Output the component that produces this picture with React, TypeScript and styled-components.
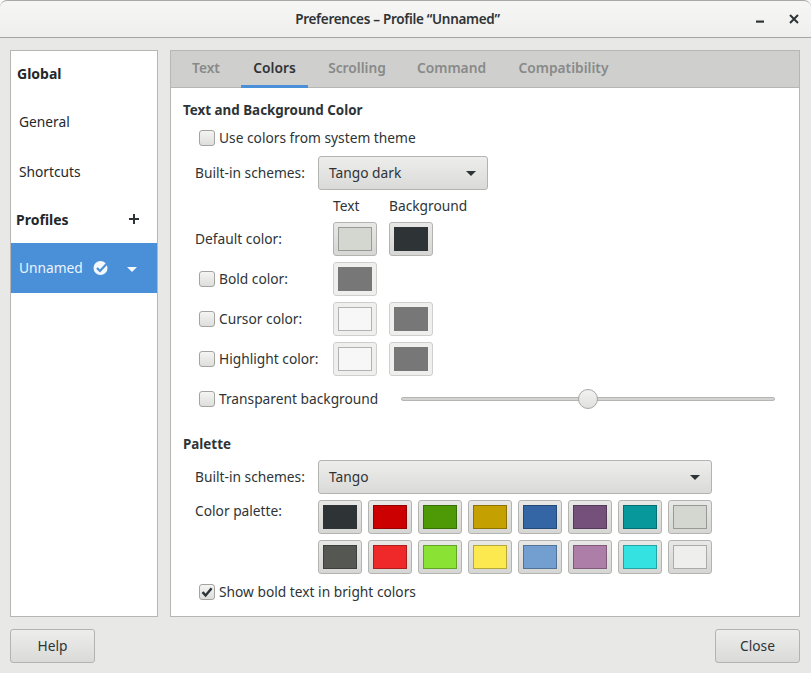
import React from "react";
import styled, { createGlobalStyle } from "styled-components";

const Global = createGlobalStyle`
  html, body { margin: 0; padding: 0; background: #fafafa; }
  body { font-family: "Noto Sans", "Open Sans", sans-serif; font-size: 13.75px; color: #2e3436; }
  * { box-sizing: border-box; }
`;

const Window = styled.div`
  width: 811px;
  height: 673px;
  display: flex;
  flex-direction: column;
  overflow: hidden;
`;

const TitleBar = styled.header`
  position: relative;
  height: 38px;
  flex: none;
  display: flex;
  align-items: center;
  justify-content: center;
  padding: 0 16px 0 0;
  background: linear-gradient(#f6f6f5, #efefee);
  border-top: 1px solid #a9a9a7;
  border-bottom: 1px solid #a4a4a2;
  border-radius: 7px 7px 0 0;
  font-weight: 600;
  font-size: 13.5px;
  letter-spacing: -0.3px;
  color: #2e3436;
`;

const WindowControls = styled.div`
  position: absolute;
  right: 9px;
  top: 11px;
  display: flex;
  gap: 14px;
  align-items: center;
`;

const Client = styled.div`
  flex: 1;
  display: flex;
  flex-direction: column;
  background: #e8e8e7;
  min-height: 0;
`;

const Main = styled.main`
  flex: none;
  display: flex;
  gap: 12px;
  padding: 12px 11px 0 10px;
`;

const Sidebar = styled.nav`
  width: 148px;
  height: 567px;
  flex: none;
  background: #fff;
  border: 1px solid #b6b6b3;
`;

const SideRow = styled.div<{ $height: number; $pad: number; $bold?: boolean }>`
  height: ${(p) => p.$height}px;
  padding: 0 16px 2px ${(p) => p.$pad}px;
  display: flex;
  align-items: center;
  justify-content: space-between;
  font-size: ${(p) => (p.$bold ? 14 : 13.75)}px;
  font-weight: ${(p) => (p.$bold ? 700 : 400)};
  color: #23282a;
`;

const SelectedRow = styled.div`
  height: 50px;
  padding-left: 8px;
  display: flex;
  align-items: center;
  background: #4a90d9;
  color: #eaf4fd;
`;

const SelectedName = styled.span`
  width: 74px;
  flex: none;
  padding-bottom: 2px;
`;

const SelectedCaret = styled.span`
  margin-left: 18px;
  display: flex;
`;

const Panel = styled.section`
  width: 630px;
  height: 567px;
  flex: none;
  background: #fff;
  border: 1px solid #b6b6b3;
  display: flex;
  flex-direction: column;
`;

const TabBar = styled.div`
  height: 37px;
  flex: none;
  display: flex;
  background: #cfcfcd;
  border-bottom: 1px solid #b6b6b3;
`;

const Tab = styled.div<{ $active?: boolean; $width: number }>`
  width: ${(p) => p.$width}px;
  height: 37px;
  display: flex;
  align-items: center;
  justify-content: center;
  padding-bottom: 1px;
  font-weight: 600;
  font-size: 13.75px;
  color: ${(p) => (p.$active ? "#2e3436" : "#888a89")};
  border-bottom: 3px solid ${(p) => (p.$active ? "#4a90d9" : "transparent")};
`;

const Content = styled.div`
  padding: 12px 12px 0 12px;
  display: flex;
  flex-direction: column;
`;

const Heading = styled.h2<{ $top?: number }>`
  margin: ${(p) => p.$top ?? 0}px 0 0 0;
  height: 20px;
  line-height: 20px;
  font-size: 13.4px;
  font-weight: 700;
  color: #2e3436;
`;

const Row = styled.div<{ $top: number; $h?: number; $left?: number }>`
  display: flex;
  align-items: center;
  margin-top: ${(p) => p.$top}px;
  height: ${(p) => p.$h ?? 20}px;
  padding-left: ${(p) => p.$left ?? 12}px;
`;

const CheckWrap = styled.label`
  display: flex;
  align-items: center;
  gap: 4px;
  white-space: nowrap;
  color: #2e3436;
`;

const CheckText = styled.span`
  padding-bottom: 2px;
`;

const CheckBox = styled.span`
  width: 16px;
  height: 16px;
  flex: none;
  display: flex;
  align-items: center;
  justify-content: center;
  border: 1px solid #a3a3a0;
  border-radius: 3px;
  background: linear-gradient(#f4f4f3, #dededc);
`;

const Label = styled.span<{ $width: number }>`
  width: ${(p) => p.$width}px;
  flex: none;
  white-space: nowrap;
  padding-bottom: 2px;
`;

const CheckCell = styled.span<{ $width: number }>`
  width: ${(p) => p.$width}px;
  flex: none;
`;

const Combo = styled.div<{ $width: number }>`
  width: ${(p) => p.$width}px;
  height: 34px;
  display: flex;
  align-items: center;
  justify-content: space-between;
  padding: 0 11px 2px 10px;
  border: 1px solid #b3b3b0;
  border-radius: 3px;
  background: linear-gradient(#ededec, #dadad8);
  color: #2e3436;
`;

const Caret = styled.span<{ $color?: string }>`
  width: 0;
  height: 0;
  margin-top: 2px;
  border-left: 5px solid transparent;
  border-right: 5px solid transparent;
  border-top: 5px solid ${(p) => p.$color ?? "#2e3436"};
`;

const Swatch = styled.div<{ $flat?: boolean }>`
  width: 44px;
  height: 34px;
  flex: none;
  padding: 4px;
  border: 1px solid ${(p) => (p.$flat ? "#cfcfcd" : "#b3b3b0")};
  border-radius: 3px;
  background: ${(p) => (p.$flat ? "#efefee" : "linear-gradient(#e8e8e7, #d6d6d4)")};
`;

const SwatchFill = styled.div<{ $fill: string; $line: string }>`
  width: 100%;
  height: 100%;
  background: ${(p) => p.$fill};
  border: 1px solid ${(p) => p.$line};
`;

const ColorHead = styled.span<{ $width: number }>`
  width: ${(p) => p.$width}px;
  flex: none;
  white-space: nowrap;
  padding-bottom: 2px;
`;

const SwatchGap = styled.div`
  width: 12px;
  flex: none;
`;

const Slider = styled.div`
  position: relative;
  width: 374px;
  height: 4px;
  margin-left: 28px;
  background: #d4d4d2;
  border: 1px solid #b5b5b2;
  border-radius: 2px;
`;

const Knob = styled.span`
  position: absolute;
  left: 176px;
  top: -9px;
  width: 20px;
  height: 20px;
  border-radius: 50%;
  border: 1px solid #a7a7a4;
  background: linear-gradient(#f2f2f1, #e0e0de);
`;

const PaletteBlock = styled.div`
  display: flex;
  margin-top: 6px;
  padding-left: 12px;
`;

const PaletteLabel = styled.span`
  width: 123px;
  flex: none;
  line-height: 20px;
  padding-top: 1px;
`;

const PaletteGrid = styled.div`
  display: grid;
  grid-template-columns: repeat(8, 44px);
  gap: 6px;
`;

const Footer = styled.footer`
  display: flex;
  justify-content: space-between;
  padding: 12px 11px 0 10px;
`;

const Button = styled.button`
  width: 85px;
  height: 34px;
  border: 1px solid #b3b3b0;
  border-radius: 3px;
  background: linear-gradient(#ededec, #dadad8);
  font: inherit;
  color: #2e3436;
  padding: 0 0 2px;
`;

const Form = styled.div``;

const darken = (hex: string) => {
  const n = parseInt(hex.slice(1), 16);
  const c = (s: number) => Math.round(((n >> s) & 255) * 0.72);
  return `rgb(${c(16)},${c(8)},${c(0)})`;
};

const palette = [
  "#2e3436", "#cc0000", "#4e9a06", "#c4a000", "#3465a4", "#75507b", "#06989a", "#d3d7cf",
  "#555753", "#ef2929", "#8ae234", "#fce94f", "#729fcf", "#ad7fa8", "#34e2e2", "#eeeeec",
];

const Check = () => <CheckBox />;

const Checked = () => (
  <CheckBox>
    <svg width="14" height="14" viewBox="0 0 14 14" fill="none">
      <path d="M2.5 7.2 L5.6 10.4 L11.6 3.2" stroke="#2e3436" strokeWidth="2.4" />
    </svg>
  </CheckBox>
);

const ColorSwatch = ({ fill, flat, plain }: { fill: string; flat?: boolean; plain?: boolean }) => (
  <Swatch $flat={flat}>
    <SwatchFill $fill={fill} $line={plain ? fill : darken(fill)} />
  </Swatch>
);

const CheckRow = ({ label }: { label: string }) => (
  <CheckWrap>
    <Check />
    <CheckText>{label}</CheckText>
  </CheckWrap>
);

export default function App() {
  return (
    <Window>
      <Global />
      <TitleBar>
        Preferences – Profile “Unnamed”
        <WindowControls>
          <svg width="16" height="16" viewBox="0 0 16 16">
            <rect x="0" y="8.5" width="8" height="2.2" fill="#2e3436" />
          </svg>
          <svg width="16" height="16" viewBox="0 0 16 16" fill="none">
            <path d="M4 3 L12 11 M12 3 L4 11" stroke="#2e3436" strokeWidth="2" />
          </svg>
        </WindowControls>
      </TitleBar>
      <Client>
        <Main>
          <Sidebar>
            <SideRow $height={46} $pad={6} $bold>Global</SideRow>
            <SideRow $height={50} $pad={8}>General</SideRow>
            <SideRow $height={50} $pad={8}>Shortcuts</SideRow>
            <SideRow $height={46} $pad={5} $bold>
              Profiles
              <svg width="14" height="14" viewBox="0 0 14 14">
                <path d="M7 2 V12 M2 7 H12" stroke="#2e3436" strokeWidth="2" />
              </svg>
            </SideRow>
            <SelectedRow>
              <SelectedName>Unnamed</SelectedName>
              <svg width="16" height="16" viewBox="0 0 16 16">
                <circle cx="7.5" cy="8" r="7" fill="#f4f8fc" />
                <path d="M4 8 L7 11 L14 3.6" stroke="#4a90d9" strokeWidth="2.2" fill="none" />
              </svg>
              <SelectedCaret><Caret $color="#f4f8fc" /></SelectedCaret>
            </SelectedRow>
          </Sidebar>
          <Panel>
            <TabBar>
              <Tab $width={70}>Text</Tab>
              <Tab $width={67} $active>Colors</Tab>
              <Tab $width={98}>Scrolling</Tab>
              <Tab $width={91}>Command</Tab>
              <Tab $width={133}>Compatibility</Tab>
            </TabBar>
            <Content>
              <Heading>Text and Background Color</Heading>
              <Row $top={8} $left={16}>
                <CheckRow label="Use colors from system theme" />
              </Row>
              <Row $top={8} $h={34}>
                <Label $width={123}>Built-in schemes:</Label>
                <Combo $width={170}>Tango dark<Caret /></Combo>
              </Row>
              <Row $top={6} $left={150}>
                <ColorHead $width={56}>Text</ColorHead>
                <ColorHead $width={80}>Background</ColorHead>
              </Row>
              <Form>
                <Row $top={6} $h={34}>
                  <Label $width={138}>Default color:</Label>
                  <ColorSwatch fill="#d3d7cf" />
                  <SwatchGap />
                  <ColorSwatch fill="#2e3436" plain />
                </Row>
                <Row $top={6} $h={34} $left={16}>
                  <CheckCell $width={134}><CheckRow label="Bold color:" /></CheckCell>
                  <ColorSwatch fill="#777777" flat plain />
                </Row>
                <Row $top={6} $h={34} $left={16}>
                  <CheckCell $width={134}><CheckRow label="Cursor color:" /></CheckCell>
                  <ColorSwatch fill="#f7f7f7" flat />
                  <SwatchGap />
                  <ColorSwatch fill="#777777" flat plain />
                </Row>
                <Row $top={6} $h={34} $left={16}>
                  <CheckCell $width={134}><CheckRow label="Highlight color:" /></CheckCell>
                  <ColorSwatch fill="#f7f7f7" flat />
                  <SwatchGap />
                  <ColorSwatch fill="#777777" flat plain />
                </Row>
              </Form>
              <Row $top={13} $left={16}>
                <CheckCell $width={174}><CheckRow label="Transparent background" /></CheckCell>
                <Slider><Knob /></Slider>
              </Row>
              <Heading $top={25}>Palette</Heading>
              <Row $top={6} $h={34}>
                <Label $width={123}>Built-in schemes:</Label>
                <Combo $width={394}>Tango<Caret /></Combo>
              </Row>
              <PaletteBlock>
                <PaletteLabel>Color palette:</PaletteLabel>
                <PaletteGrid>
                  {palette.map((c) => <ColorSwatch key={c} fill={c} plain={c === "#2e3436"} />)}
                </PaletteGrid>
              </PaletteBlock>
              <Row $top={8} $left={16}>
                <CheckWrap><Checked /><CheckText>Show bold text in bright colors</CheckText></CheckWrap>
              </Row>
            </Content>
          </Panel>
        </Main>
        <Footer>
          <Button>Help</Button>
          <Button>Close</Button>
        </Footer>
      </Client>
    </Window>
  );
}
